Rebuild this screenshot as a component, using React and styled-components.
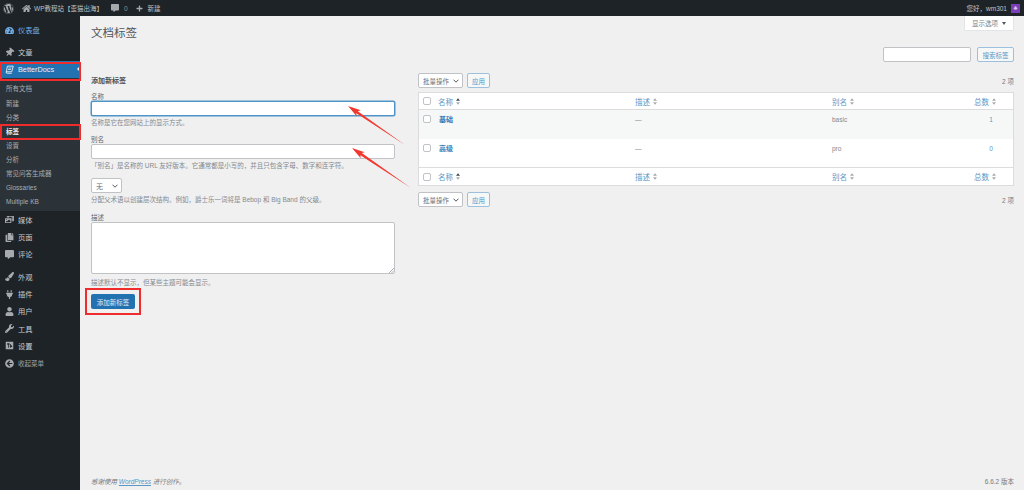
import styled, { createGlobalStyle } from 'styled-components';
import {
  FaWordpress, FaHome, FaCommentAlt, FaPlus, FaTachometerAlt, FaThumbtack, FaPhotoVideo,
  FaCopy, FaPaintBrush, FaPlug, FaUser, FaWrench, FaArrowCircleLeft,
} from 'react-icons/fa';

const GlobalStyle = createGlobalStyle`
  html, body { margin: 0; padding: 0; height: 100%; overflow: hidden; }
  body {
    background: #f0f0f1;
    font-family: "Liberation Sans", "Noto Sans CJK SC", sans-serif;
    font-size: 7px;
    color: #50555a;
  }
  * { box-sizing: border-box; }
`;

const Page = styled.div`
  position: relative;
  width: 1024px;
  height: 490px;
  overflow: hidden;
`;

const TopBar = styled.header`
  display: flex;
  align-items: center;
  height: 16px;
  padding: 0 4px 0 3px;
  background: #1d2327;
  color: #c3c4c7;
  font-size: 6.5px;
`;

const BarItem = styled.span`
  display: flex;
  align-items: center;
  gap: ${(p) => p.$gap || 3}px;
  margin-left: ${(p) => p.$ml || 0}px;
  color: ${(p) => p.$color || '#bfc1c4'};
  svg { color: #a7aaad; }
`;

const Greeting = styled.span`
  margin-left: auto;
  display: flex;
  align-items: center;
  gap: 4px;
`;

const Avatar = styled.span`
  display: flex;
  align-items: center;
  justify-content: center;
  width: 9px;
  height: 9px;
  background: #7b3fb5;
  color: #d9c5ee;
  font-size: 6px;
  line-height: 1;
`;

const Body = styled.div`
  display: flex;
  height: 474px;
`;

const Sidebar = styled.nav`
  flex: none;
  width: 80px;
  background: #1d2327;
  padding-top: 5.5px;
`;

const MenuItem = styled.div`
  display: flex;
  align-items: center;
  position: relative;
  height: 17.3px;
  padding-left: 5px;
  gap: 4px;
  font-size: 7.3px;
  margin-bottom: ${(p) => (p.$sep ? 5 : 0)}px;
  background: ${(p) => (p.$active ? '#2271b1' : 'transparent')};
  color: ${(p) => (p.$active ? '#f0f0f1' : p.$current ? '#72aee6' : '#c9cbcd')};
  svg { flex: none; width: 9px; height: 9px; color: ${(p) => (p.$active ? '#fff' : p.$current ? '#72aee6' : '#a7aaad')}; }
`;

const Collapse = styled(MenuItem)`
  font-size: 6.5px;
  color: #a0a3a6;
`;

const PinIcon = styled(FaThumbtack)`
  transform: rotate(40deg);
`;

const ActiveNotch = styled.span`
  position: absolute;
  right: 0;
  top: 5px;
  border: 3.5px solid transparent;
  border-right-color: #f0f0f1;
  border-left-width: 0;
`;

const SubMenu = styled.div`
  background: #2c3338;
  padding: 3px 0;
`;

const SubItem = styled.div`
  display: flex;
  align-items: center;
  height: 14.1px;
  padding-left: 6px;
  font-size: 6.5px;
  font-weight: ${(p) => (p.$current ? 700 : 400)};
  color: ${(p) => (p.$current ? '#f0f0f1' : '#a9aeb2')};
`;

const Main = styled.main`
  flex: 1;
  position: relative;
  display: flex;
  flex-direction: column;
  padding: 0 10px 0 11px;
`;

const ScreenRow = styled.div`
  display: flex;
  justify-content: flex-end;
`;

const ScreenTab = styled.div`
  display: flex;
  align-items: center;
  justify-content: center;
  gap: 4px;
  width: 50px;
  height: 15px;
  background: #fff;
  border: 1px solid #e2e4e7;
  border-top: none;
  border-radius: 0 0 2px 2px;
  color: #7c8085;
  font-size: 6.5px;
`;

const Caret = styled.i`
  width: 0;
  height: 0;
  border: 2.5px solid transparent;
  border-top: 3px solid #50575e;
  border-bottom: none;
`;

const Title = styled.h1`
  margin: -8px 0 0;
  height: 20px;
  line-height: 20px;
  font-size: 11.5px;
  font-weight: 400;
  color: #50555a;
`;

const SearchRow = styled.div`
  display: flex;
  justify-content: flex-end;
  gap: 6px;
  margin-top: 4px;
  height: 15px;
`;

const SearchInput = styled.div`
  width: 88px;
  height: 15px;
  background: #fff;
  border: 1px solid #c0c2c5;
  border-radius: 2px;
`;

const OutlineButton = styled.div`
  display: flex;
  align-items: center;
  justify-content: center;
  width: ${(p) => p.$w}px;
  height: 15px;
  background: #f6f7f7;
  border: 1px solid #9cc0dd;
  border-radius: 2px;
  color: #5a96c6;
  font-size: 6.5px;
`;

const Columns = styled.div`
  display: flex;
  margin-top: 11px;
`;

const FormCol = styled.section`
  flex: none;
  width: 304px;
  margin-right: 23px;
`;

const FormHeading = styled.h2`
  margin: 0;
  height: 14px;
  line-height: 14px;
  font-size: 7px;
  font-weight: 700;
  color: #4a4f54;
`;

const Field = styled.div`
  margin-top: ${(p) => p.$mt || 0}px;
`;

const Label = styled.div`
  height: 9px;
  line-height: 9px;
  font-size: 6.5px;
  color: #62666a;
`;

const TextBox = styled.div`
  height: ${(p) => p.$h || 15}px;
  background: #fff;
  border-radius: 2px;
  position: relative;
  border: 1px solid ${(p) => (p.$focus ? '#4f93c9' : '#c0c2c5')};
  box-shadow: ${(p) => (p.$focus ? '0 0 0 0.5px #4f93c9' : 'none')};
`;

const Grip = styled.svg`
  position: absolute;
  right: 0;
  bottom: 0;
`;

const Help = styled.p`
  margin: ${(p) => p.$mt || 2}px 0 0;
  height: 9px;
  line-height: 9px;
  font-size: 6.5px;
  color: #85898d;
`;

const SelectBox = styled.div`
  display: flex;
  align-items: center;
  justify-content: space-between;
  width: ${(p) => p.$w}px;
  height: 15px;
  padding: 0 3px 0 ${(p) => p.$pl || 4}px;
  background: #fff;
  border: 1px solid #c0c2c5;
  border-radius: 2px;
  color: #6b6f73;
  font-size: ${(p) => p.$fs || 7}px;
  svg { flex: none; }
`;

const SubmitWrap = styled.div`
  position: relative;
  margin-top: 7px;
`;

const PrimaryButton = styled.div`
  display: flex;
  align-items: center;
  justify-content: center;
  width: 44px;
  height: 15px;
  background: #2271b1;
  border-radius: 2px;
  color: #e6eef5;
  font-size: 6.5px;
`;

const HighlightBox = styled.span`
  position: absolute;
  pointer-events: none;
  border: 2px solid #f02b2b;
  left: ${(p) => p.$l}px;
  top: ${(p) => p.$t}px;
  width: ${(p) => p.$w}px;
  height: ${(p) => p.$h}px;
`;

const TableCol = styled.section`
  flex: 1;
  min-width: 0;
`;

const Tablenav = styled.div`
  display: flex;
  align-items: center;
  gap: 4px;
  height: 15px;
  margin: ${(p) => p.$m || 0};
`;

const ItemCount = styled.span`
  margin-left: auto;
  font-size: 6.5px;
  color: #75797d;
`;

const ListTable = styled.div`
  margin-top: 4px;
  background: #fff;
  border: 1px solid #dcdcde;
`;

const Row = styled.div`
  display: grid;
  grid-template-columns: 19px 197px 197px 1fr 56px;
  height: ${(p) => p.$h}px;
  background: ${(p) => (p.$alt ? '#f6f7f7' : '#fff')};
  border-bottom: ${(p) => (p.$bb ? '1px solid #dcdcde' : 'none')};
  border-top: ${(p) => (p.$bt ? '1px solid #dcdcde' : 'none')};
  align-items: ${(p) => (p.$head ? 'center' : 'start')};
  padding-top: ${(p) => (p.$head ? 0 : 5)}px;
`;

const CheckCell = styled.span`
  display: flex;
  padding-left: 4px;
`;

const CheckBox = styled.i`
  display: block;
  width: 8px;
  height: 8px;
  background: #fff;
  border: 1px solid #c0c2c5;
  border-radius: 2px;
`;

const HeadLink = styled.span`
  display: flex;
  align-items: center;
  gap: 3px;
  color: #5a96c6;
  font-size: 7.5px;
  justify-content: ${(p) => (p.$center ? 'center' : 'flex-start')};
`;

const NameLink = styled.span`
  padding-left: 1px;
  font-weight: 700;
  font-size: 7px;
  line-height: 9px;
  color: #3380bd;
`;

const Cell = styled.span`
  font-size: 6.5px;
  line-height: 9px;
  color: #85898d;
`;

const CountCell = styled.span`
  font-size: 6.5px;
  line-height: 9px;
  color: #5a96c6;
  text-align: center;
  padding-left: 12px;
`;

const Footer = styled.footer`
  display: flex;
  justify-content: space-between;
  align-items: center;
  margin-top: auto;
  height: 18px;
  font-size: 6.5px;
  color: #75797d;
  a { color: #5a96c6; text-decoration: underline; }
`;

const Thanks = styled.span`
  font-style: italic;
`;

const ArrowOverlay = styled.svg`
  position: absolute;
  left: 0;
  top: 0;
  pointer-events: none;
`;

function Sort({ up }) {
  return (
    <svg width="4" height="7" viewBox="0 0 5 8">
      <path d="M2.5 0 L5 3 H0 Z" fill={up ? '#3c434a' : '#a7aaad'} />
      <path d="M2.5 8 L5 5 H0 Z" fill="#a7aaad" />
    </svg>
  );
}

function Chevron() {
  return (
    <svg width="6" height="4" viewBox="0 0 6 4">
      <path d="M0.5 0.7 L3 3.2 L5.5 0.7" fill="none" stroke="#50575e" strokeWidth="1" />
    </svg>
  );
}

function BookIcon() {
  return (
    <svg viewBox="0 0 12 12">
      <path d="M3.2 1.5 H11 L9 9 H1.8 Z M1.8 9 Q0.8 11 3 11 H9" fill="none" stroke="currentColor" strokeWidth="1.1" />
      <path d="M4.5 4 H8.5 M4 6 H8" stroke="currentColor" strokeWidth="0.9" />
    </svg>
  );
}

function SettingsIcon() {
  return (
    <svg viewBox="0 0 12 12">
      <path fillRule="evenodd" fill="currentColor" d="M1 1 H11 V11 H1 Z M3 3 V5 H4 V9 H5 V5 H6 V3 Z M7 4 V6 H6.5 V8 H7 V9 H8 V8 H9.5 V6 H8 V4 Z" />
    </svg>
  );
}

function RedArrow({ tail, tip }) {
  const [x1, y1] = tail;
  const [x2, y2] = tip;
  const len = Math.hypot(x2 - x1, y2 - y1);
  const ux = (x2 - x1) / len;
  const uy = (y2 - y1) / len;
  const nx = -uy;
  const ny = ux;
  // shaft widens toward the head, head has swept-back barbs
  const at = (d, w) => `${x2 - ux * d + nx * w},${y2 - uy * d + ny * w}`;
  const points = [
    `${x1},${y1}`, at(11, 1.3), at(13, 3.6), `${x2},${y2}`, at(13, -3.6), at(11, -1.3),
  ].join(' ');
  return <polygon points={points} fill="#f03a30" />;
}

function TableNavRow({ m }) {
  return (
    <Tablenav $m={m}>
      <SelectBox $w={45} $fs={6.5}>批量操作<Chevron /></SelectBox>
      <OutlineButton $w={23}>应用</OutlineButton>
      <ItemCount>2 项</ItemCount>
    </Tablenav>
  );
}

function HeadRow({ foot }) {
  return (
    <Row $head $h={foot ? 18 : 17} $bb={!foot} $bt={foot}>
      <CheckCell><CheckBox /></CheckCell>
      <HeadLink>名称 <Sort up /></HeadLink>
      <HeadLink>描述 <Sort /></HeadLink>
      <HeadLink>别名 <Sort /></HeadLink>
      <HeadLink $center>总数 <Sort /></HeadLink>
    </Row>
  );
}

function TagRow({ name, slug, count, alt, h }) {
  return (
    <Row $alt={alt} $h={h}>
      <CheckCell><CheckBox /></CheckCell>
      <NameLink>{name}</NameLink>
      <Cell>—</Cell>
      <Cell>{slug}</Cell>
      <CountCell>{count}</CountCell>
    </Row>
  );
}

export default function App() {
  return (
    <Page>
      <GlobalStyle />
      <TopBar>
        <BarItem><FaWordpress size={11} /></BarItem>
        <BarItem $ml={8}><FaHome size={9} />WP教程站【歪猫出海】</BarItem>
        <BarItem $ml={8} $gap={5} $color="#8c8f94"><FaCommentAlt size={8} />0</BarItem>
        <BarItem $ml={8} $gap={5}><FaPlus size={7} />新建</BarItem>
        <Greeting>您好，wm301<Avatar>♣</Avatar></Greeting>
      </TopBar>
      <Body>
        <Sidebar>
          <MenuItem $current $sep><FaTachometerAlt />仪表盘</MenuItem>
          <MenuItem><PinIcon />文章</MenuItem>
          <MenuItem $active>
            <BookIcon />BetterDocs<ActiveNotch />
          </MenuItem>
          <SubMenu>
            <SubItem>所有文档</SubItem>
            <SubItem>新建</SubItem>
            <SubItem>分类</SubItem>
            <SubItem $current>标签</SubItem>
            <SubItem>设置</SubItem>
            <SubItem>分析</SubItem>
            <SubItem>常见问答生成器</SubItem>
            <SubItem>Glossaries</SubItem>
            <SubItem>Multiple KB</SubItem>
          </SubMenu>
          <MenuItem><FaPhotoVideo />媒体</MenuItem>
          <MenuItem><FaCopy />页面</MenuItem>
          <MenuItem $sep><FaCommentAlt />评论</MenuItem>
          <MenuItem><FaPaintBrush />外观</MenuItem>
          <MenuItem><FaPlug />插件</MenuItem>
          <MenuItem><FaUser />用户</MenuItem>
          <MenuItem><FaWrench />工具</MenuItem>
          <MenuItem><SettingsIcon />设置</MenuItem>
          <Collapse><FaArrowCircleLeft />收起菜单</Collapse>
        </Sidebar>
        <Main>
          <ScreenRow>
            <ScreenTab>显示选项<Caret /></ScreenTab>
          </ScreenRow>
          <Title>文档标签</Title>
          <SearchRow>
            <SearchInput />
            <OutlineButton $w={37}>搜索标签</OutlineButton>
          </SearchRow>
          <Columns>
            <FormCol>
              <Field $mt={1}><FormHeading>添加新标签</FormHeading></Field>
              <Field $mt={4}>
                <Label>名称</Label>
                <TextBox $focus />
                <Help>名称是它在您网站上的显示方式。</Help>
              </Field>
              <Field $mt={8}>
                <Label>别名</Label>
                <TextBox />
                <Help>「别名」是名称的 URL 友好版本。它通常都是小写的，并且只包含字母、数字和连字符。</Help>
              </Field>
              <Field $mt={8}>
                <SelectBox $w={31}>无<Chevron /></SelectBox>
                <Help>分配父术语以创建层次结构。例如，爵士乐一词将是 Bebop 和 Big Band 的父级。</Help>
              </Field>
              <Field $mt={9}>
                <Label>描述</Label>
                <TextBox $h={52}>
                  <Grip width="5" height="5" viewBox="0 0 5 5">
                    <path d="M5 0 L0 5 M5 2.5 L2.5 5" stroke="#8c8f94" strokeWidth="0.7" />
                  </Grip>
                </TextBox>
                <Help $mt={4}>描述默认不显示，但某些主题可能会显示。</Help>
              </Field>
              <SubmitWrap>
                <PrimaryButton>添加新标签</PrimaryButton>
                <HighlightBox $l={-6} $t={-6} $w={56} $h={27} />
              </SubmitWrap>
            </FormCol>
            <TableCol>
              <TableNavRow />
              <ListTable>
                <HeadRow />
                <TagRow name="基础" slug="basic" count="1" alt h={29} />
                <TagRow name="高级" slug="pro" count="0" h={28} />
                <HeadRow foot />
              </ListTable>
              <TableNavRow m="6px 0 0" />
            </TableCol>
          </Columns>
          <Footer>
            <Thanks>感谢使用 <a>WordPress</a> 进行创作。</Thanks>
            <span>6.6.2 版本</span>
          </Footer>
        </Main>
      </Body>
      <HighlightBox $l={0} $t={62} $w={81} $h={19} />
      <HighlightBox $l={0} $t={124} $w={81} $h={16} />
      <ArrowOverlay width="1024" height="490">
        <RedArrow tail={[405, 145]} tip={[348, 106]} />
        <RedArrow tail={[411, 188]} tip={[352, 148]} />
      </ArrowOverlay>
    </Page>
  );
}
